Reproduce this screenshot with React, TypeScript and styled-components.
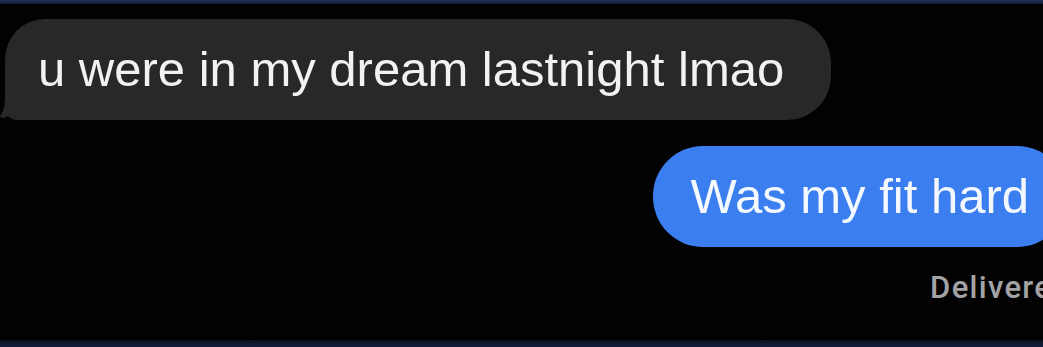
import styled, { createGlobalStyle } from 'styled-components';

const GlobalStyle = createGlobalStyle`
  html, body {
    margin: 0;
    padding: 0;
    background: #000;
  }
  body {
    font-family: "Liberation Sans", Arial, sans-serif;
    -webkit-font-smoothing: antialiased;
  }
`;

const Screen = styled.div`
  width: 1043px;
  height: 347px;
  display: flex;
  flex-direction: column;
  background: #020203;
  overflow: hidden;
`;

const Edge = styled.div`
  flex: none;
  height: 4px;
  background: linear-gradient(#24315a, #141b33);
`;

const Thread = styled.div`
  flex: 1;
  display: flex;
  flex-direction: column;
  padding: 15px 0 0 5px;
`;

const Row = styled.div<{ $out?: boolean }>`
  display: flex;
  justify-content: ${(p) => (p.$out ? 'flex-end' : 'flex-start')};
  margin-right: ${(p) => (p.$out ? '-24px' : '0')};
`;

const Bubble = styled.div<{ $out?: boolean }>`
  position: relative;
  height: 101px;
  display: flex;
  align-items: center;
  box-sizing: border-box;
  padding: ${(p) => (p.$out ? '0 38px 2px 37px' : '0 47px 2px 33px')};
  border-radius: ${(p) => (p.$out ? '50px' : '40px 44px 44px 12px')};
  background: ${(p) => (p.$out ? '#3b7ef0' : '#28282a')};
  color: ${(p) => (p.$out ? '#f4f8ff' : '#f2f2f2')};
  font-size: 49px;
  white-space: nowrap;
`;

const Tail = styled.svg`
  position: absolute;
  left: -5px;
  bottom: 0;
  width: 30px;
  height: 26px;
`;

const Gap = styled.div`
  height: 26px;
`;

const Status = styled.div`
  display: flex;
  justify-content: flex-end;
  margin-right: -28px;
  padding-top: 22px;
  font-family: Roboto, "Liberation Sans", sans-serif;
  font-size: 31px;
  font-weight: 500;
  letter-spacing: 1.3px;
  color: #a3a3a6;
`;

const Footer = styled.div`
  flex: none;
  height: 7px;
  background: linear-gradient(#0b1020, #17203c);
`;

export default function App() {
  return (
    <>
      <GlobalStyle />
      <Screen>
        <Edge />
        <Thread>
          <Row>
            <Bubble>
              <Tail viewBox="0 0 30 26">
                <path d="M5 0 H30 V26 H22 C18 22 12 20 6 23 C3 24.5 1 24 0 22 C4 18 5 10 5 0 Z" fill="#28282a" />
              </Tail>
              u were in my dream lastnight lmao
            </Bubble>
          </Row>
          <Gap />
          <Row $out>
            <Bubble $out>Was my fit hard</Bubble>
          </Row>
          <Status>Delivered</Status>
        </Thread>
        <Footer />
      </Screen>
    </>
  );
}
